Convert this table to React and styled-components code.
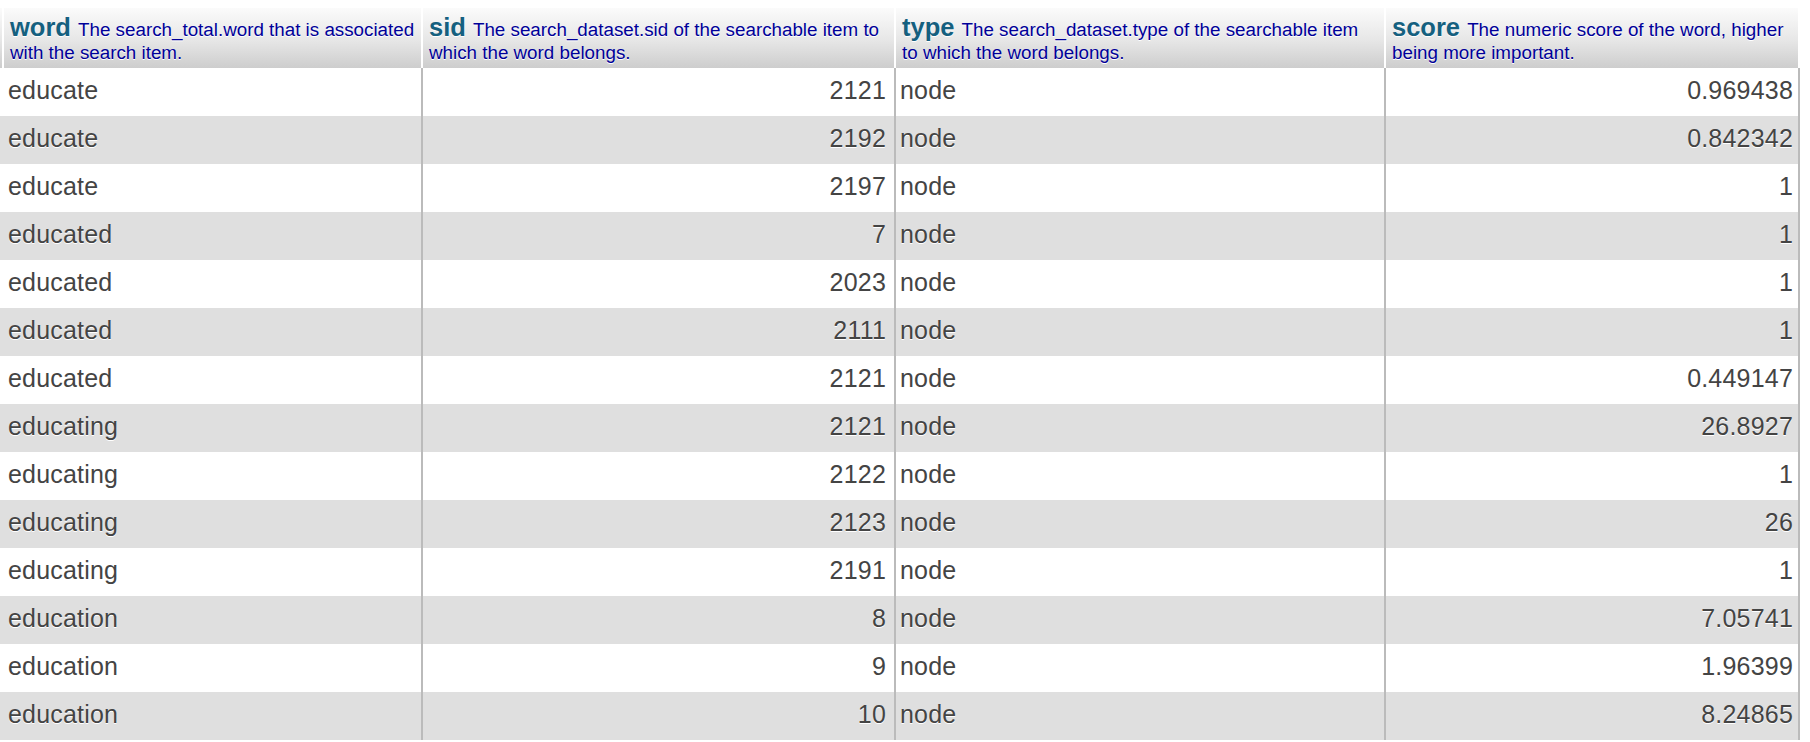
import React from "react";
import styled, { createGlobalStyle } from "styled-components";

const Global = createGlobalStyle`
  html, body { margin: 0; padding: 0; background: #ffffff; }
  body { font-family: "Liberation Sans", Arial, Helvetica, sans-serif; }
`;

const Page = styled.div`
  padding-top: 8px;
`;

const Table = styled.table`
  width: 1800px;
  table-layout: fixed;
  border-collapse: separate;
  border-spacing: 0;
  font-family: "Liberation Sans", Arial, Helvetica, sans-serif;
`;

const Col = styled.col`
  width: ${(p) => p.$w}px;
`;

const HeadCell = styled.th`
  box-sizing: border-box;
  height: 60px;
  padding: ${(p) => (p.$stub ? "0" : "8px 0 0 6px")};
  vertical-align: top;
  text-align: left;
  font-weight: normal;
  white-space: nowrap;
  overflow: hidden;
  background: linear-gradient(#fbfbfb, #e6e6e6 55%, #cdcdcd);
  border-right: 2px solid #ffffff;
  line-height: 22px;
  text-shadow: 0 1px 0 #ffffff;
`;

const Label = styled.span`
  font-size: 25.5px;
  font-weight: bold;
  color: #15607f;
  line-height: 22px;
`;

const Desc = styled.span`
  font-size: 18.8px;
  color: #000099;
`;

const Row = styled.tr`
  height: 48px;
  background: ${(p) => (p.$alt ? "#dfdfdf" : "#ffffff")};
`;

const Cell = styled.td`
  box-sizing: border-box;
  height: 48px;
  padding: ${(p) => (p.$stub ? "0" : `0 ${p.$pr ?? 4}px 4px 4px`)};
  font-size: 25px;
  letter-spacing: 0.2px;
  line-height: 44px;
  color: #444444;
  text-align: ${(p) => (p.$num ? "right" : "left")};
  border-right: ${(p) => (p.$stub ? "none" : "2px solid #bbbbbb")};
  white-space: nowrap;
  overflow: hidden;
  text-shadow: 0 1px 0 #ffffff;
`;

const columns = [
  { key: "word", w: 419, lines: ["The search_total.word that is associated", "with the search item."] },
  { key: "sid", w: 473, lines: ["The search_dataset.sid of the searchable item to", "which the word belongs."], num: true, pr: 8 },
  { key: "type", w: 490, lines: ["The search_dataset.type of the searchable item", "to which the word belongs."] },
  { key: "score", w: 414, lines: ["The numeric score of the word, higher", "being more important."], num: true, pr: 5 },
];

const rows = [
  ["educate", "2121", "node", "0.969438"],
  ["educate", "2192", "node", "0.842342"],
  ["educate", "2197", "node", "1"],
  ["educated", "7", "node", "1"],
  ["educated", "2023", "node", "1"],
  ["educated", "2111", "node", "1"],
  ["educated", "2121", "node", "0.449147"],
  ["educating", "2121", "node", "26.8927"],
  ["educating", "2122", "node", "1"],
  ["educating", "2123", "node", "26"],
  ["educating", "2191", "node", "1"],
  ["education", "8", "node", "7.05741"],
  ["education", "9", "node", "1.96399"],
  ["education", "10", "node", "8.24865"],
];

export default function App() {
  return (
    <>
      <Global />
      <Page>
        <Table>
          <colgroup>
            <Col $w={4} />
            {columns.map((c) => (
              <Col key={c.key} $w={c.w} />
            ))}
          </colgroup>
          <thead>
            <tr>
              <HeadCell $stub />
              {columns.map((c) => (
                <HeadCell key={c.key}>
                  <Label>{c.key} </Label>
                  <Desc>
                    {c.lines[0]}
                    <br />
                    {c.lines[1]}
                  </Desc>
                </HeadCell>
              ))}
            </tr>
          </thead>
          <tbody>
            {rows.map((r, i) => (
              <Row key={i} $alt={i % 2 === 1}>
                <Cell $stub />
                {r.map((v, j) => (
                  <Cell key={j} $num={columns[j].num} $pr={columns[j].pr}>
                    {v}
                  </Cell>
                ))}
              </Row>
            ))}
          </tbody>
        </Table>
      </Page>
    </>
  );
}
